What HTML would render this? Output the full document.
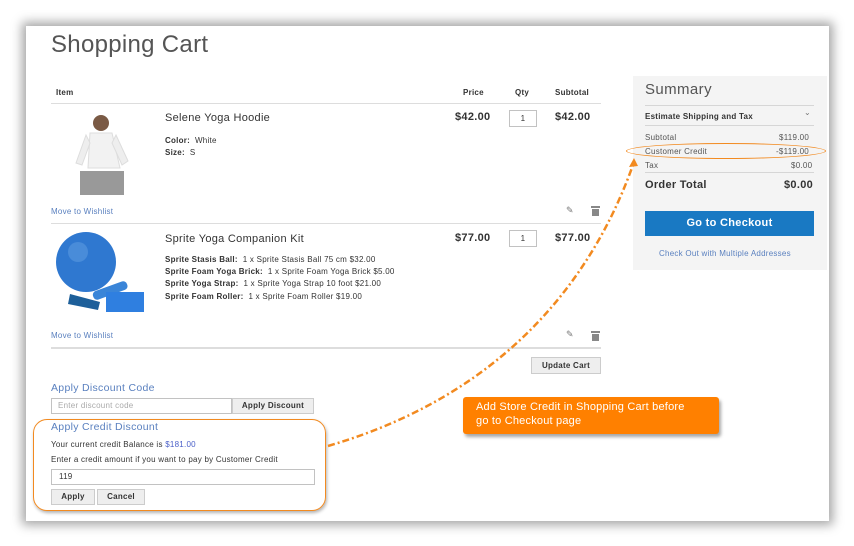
<!DOCTYPE html>
<html><head><meta charset="utf-8"><style>
*{margin:0;padding:0;box-sizing:border-box}
body{width:854px;height:546px;background:#fff;position:relative;overflow:hidden;font-family:"Liberation Sans",sans-serif;color:#333}
.a{position:absolute;white-space:nowrap}
.page{position:absolute;left:26px;top:26px;width:803px;height:495px;background:#fff;box-shadow:0 0 10px 4px rgba(0,0,0,.35)}
.s{font-size:8px;letter-spacing:.25px}
.b{font-weight:bold}
.lnk{color:#5a80bf}
.line{position:absolute;height:1px;background:#ddd}
.btn{position:absolute;background:#eee;border:1px solid #ccc;font-size:8px;letter-spacing:.25px;font-weight:bold;text-align:center;color:#333}
.inp{position:absolute;background:#fff;border:1px solid #c2c2c2;font-size:8px;letter-spacing:.25px}
.m{font-size:11px;letter-spacing:.3px}
</style></head><body>
<div class="page"></div>
<div class="a" style="left:51px;top:31px;font-size:24px;color:#555;letter-spacing:.3px">Shopping Cart</div>
<div class="a s b" style="left:56px;top:88px">Item</div>
<div class="a s b" style="left:463px;top:88px">Price</div>
<div class="a s b" style="left:515px;top:88px">Qty</div>
<div class="a s b" style="left:555px;top:88px">Subtotal</div>
<div class="line" style="left:51px;top:103px;width:550px"></div>
<svg class="a" style="left:60px;top:113px" width="84" height="84">
<circle cx="41" cy="10" r="8" fill="#7a5a45"/><path d="M30 20 L52 20 L60 55 L28 55 Z" fill="#f2f2f2" stroke="#ddd"/>
<path d="M26 22 L16 50 L22 52 L30 30Z M56 22 L68 48 L62 52 L52 30Z" fill="#eee" stroke="#ddd"/>
<rect x="20" y="58" width="44" height="24" fill="#999"/></svg>
<div class="a m" style="left:165px;top:112px">Selene Yoga Hoodie</div>
<div class="a s" style="left:165px;top:136px"><b>Color:</b>&nbsp; White</div>
<div class="a s" style="left:165px;top:148px"><b>Size:</b>&nbsp; S</div>
<div class="a b m" style="left:455px;top:111px">$42.00</div>
<div class="inp" style="left:509px;top:110px;width:28px;height:17px;text-align:center;line-height:15px">1</div>
<div class="a b m" style="left:555px;top:111px">$42.00</div>
<div class="a s lnk" style="left:51px;top:207px">Move to Wishlist</div>
<div class="a" style="left:566px;top:205px;font-size:9px;color:#777">✎</div>
<svg class="a" style="left:591px;top:206px" width="9" height="10"><rect x="0" y="0" width="9" height="2" fill="#888"/><rect x="1" y="3" width="7" height="7" fill="#888"/></svg>
<div class="line" style="left:51px;top:223px;width:550px"></div>
<svg class="a" style="left:50px;top:226px" width="100" height="90">
<circle cx="36" cy="36" r="30" fill="#2f78d0"/><circle cx="28" cy="26" r="10" fill="#5b9ae0" opacity=".6"/>
<rect x="42" y="60" width="36" height="9" rx="4" fill="#3a85d8" transform="rotate(-20 60 64)"/>
<rect x="56" y="66" width="38" height="20" fill="#2f7fe0"/>
<path d="M20 68 L50 76 L48 84 L18 78Z" fill="#1d5f9a"/></svg>
<div class="a m" style="left:165px;top:233px">Sprite Yoga Companion Kit</div>
<div class="a s" style="left:165px;top:255px"><b>Sprite Stasis Ball:</b>&nbsp; 1 x Sprite Stasis Ball 75 cm $32.00</div>
<div class="a s" style="left:165px;top:267px"><b>Sprite Foam Yoga Brick:</b>&nbsp; 1 x Sprite Foam Yoga Brick $5.00</div>
<div class="a s" style="left:165px;top:279px"><b>Sprite Yoga Strap:</b>&nbsp; 1 x Sprite Yoga Strap 10 foot $21.00</div>
<div class="a s" style="left:165px;top:292px"><b>Sprite Foam Roller:</b>&nbsp; 1 x Sprite Foam Roller $19.00</div>
<div class="a b m" style="left:455px;top:232px">$77.00</div>
<div class="inp" style="left:509px;top:230px;width:28px;height:17px;text-align:center;line-height:15px">1</div>
<div class="a b m" style="left:555px;top:232px">$77.00</div>
<div class="a s lnk" style="left:51px;top:331px">Move to Wishlist</div>
<div class="a" style="left:566px;top:329px;font-size:9px;color:#777">✎</div>
<svg class="a" style="left:591px;top:331px" width="9" height="10"><rect x="0" y="0" width="9" height="2" fill="#888"/><rect x="1" y="3" width="7" height="7" fill="#888"/></svg>
<div class="line" style="left:51px;top:347px;width:550px;height:2px"></div>
<div class="btn" style="left:531px;top:357px;width:70px;height:17px;line-height:15px">Update Cart</div>
<div class="a lnk" style="left:51px;top:382px;font-size:10.5px;letter-spacing:.3px">Apply Discount Code</div>
<div class="inp" style="left:51px;top:398px;width:181px;height:16px;color:#aaa;padding-left:6px;line-height:14px">Enter discount code</div>
<div class="btn" style="left:232px;top:398px;width:82px;height:16px;line-height:14px">Apply Discount</div>
<div class="a" style="left:33px;top:419px;width:293px;height:92px;border:1.5px solid #f28a20;border-radius:14px;box-shadow:1px 2px 3px rgba(0,0,0,.3)"></div>
<div class="a lnk" style="left:51px;top:421px;font-size:10.5px;letter-spacing:.3px">Apply Credit Discount</div>
<div class="a s" style="left:51px;top:440px">Your current credit Balance is <span style="color:#4a5fc8">$181.00</span></div>
<div class="a s" style="left:51px;top:455px">Enter a credit amount if you want to pay by Customer Credit</div>
<div class="inp" style="left:51px;top:469px;width:264px;height:16px;padding-left:7px;line-height:14px">119</div>
<div class="btn" style="left:51px;top:489px;width:44px;height:16px;line-height:14px">Apply</div>
<div class="btn" style="left:97px;top:489px;width:48px;height:16px;line-height:14px">Cancel</div>
<div class="a" style="left:633px;top:76px;width:194px;height:194px;background:#f4f4f4"></div>
<div class="a" style="left:645px;top:81px;font-size:15px;color:#555;letter-spacing:.4px">Summary</div>
<div class="line" style="left:645px;top:105px;width:169px;background:#d6d6d6"></div>
<div class="a s b" style="left:645px;top:112px">Estimate Shipping and Tax</div>
<div class="a" style="left:804px;top:108px;font-size:8px;color:#777">⌄</div>
<div class="line" style="left:645px;top:125px;width:169px;background:#d6d6d6"></div>
<div class="a s" style="left:645px;top:133px;color:#555">Subtotal</div><div class="a s" style="left:779px;top:133px;color:#555">$119.00</div>
<div class="a s" style="left:645px;top:147px;color:#555">Customer Credit</div><div class="a s" style="left:776px;top:147px;color:#555">-$119.00</div>
<div class="a s" style="left:645px;top:161px;color:#555">Tax</div><div class="a s" style="left:791px;top:161px;color:#555">$0.00</div>
<div class="line" style="left:645px;top:172px;width:169px;background:#d6d6d6"></div>
<div class="a b m" style="left:645px;top:179px">Order Total</div><div class="a b m" style="left:784px;top:179px">$0.00</div>
<div class="a" style="left:645px;top:211px;width:169px;height:25px;background:#1979c3;color:#fff;font-weight:bold;font-size:11px;letter-spacing:.3px;text-align:center;line-height:25px">Go to Checkout</div>
<div class="a s lnk" style="left:659px;top:249px">Check Out with Multiple Addresses</div>
<div class="a" style="left:626px;top:143px;width:200px;height:16px;border:1.5px solid #f28a20;border-radius:50%"></div>
<svg class="a" style="left:0;top:0" width="854" height="546"><path d="M328 446 C 520 390 600 260 634 162" fill="none" stroke="#f28a20" stroke-width="2.5" stroke-dasharray="7 3 2 3"/><path d="M634 158 l-5 9 l9 -1 z" fill="#f28a20"/></svg>
<div class="a" style="left:463px;top:397px;width:256px;height:37px;background:#ff8000;border-radius:3px;box-shadow:2px 3px 3px rgba(0,0,0,.35);color:#fff;font-size:11px;letter-spacing:.2px;line-height:13.5px;padding:4px 0 0 13px">Add Store Credit in Shopping Cart before<br>go to Checkout page</div>
</body></html>
